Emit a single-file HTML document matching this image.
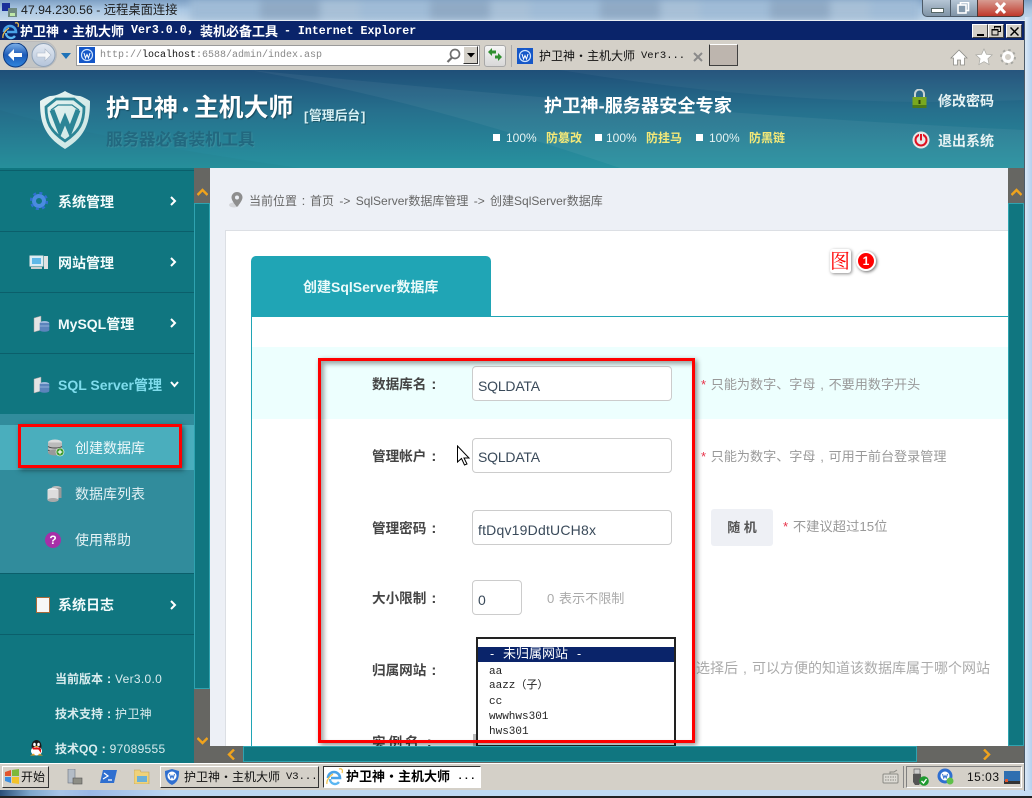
<!DOCTYPE html>
<html lang="zh"><head><meta charset="utf-8"><title>护卫神·主机大师</title>
<style>
html,body{margin:0;padding:0;width:1032px;height:798px;overflow:hidden;background:#a9c6e2}
body{position:relative;font-family:"Liberation Sans","Noto Sans CJK SC",sans-serif}
.a{position:absolute}
.t{position:absolute;white-space:nowrap;line-height:1}
.b{font-weight:bold}
.c{display:inline-block;width:1em;text-align:center;font-family:"Liberation Sans",sans-serif;font-size:1.1em;letter-spacing:0}
.sep{position:absolute;left:0;width:194px;height:1px;background:#0b5f6b}
.inp{position:absolute;box-sizing:border-box;background:#fff;border:1px solid #ccc;border-radius:4px}
.val{position:absolute;white-space:nowrap;font-size:14px;line-height:1;color:#3a4a5a}
.lab{position:absolute;white-space:nowrap;font-size:13.6px;line-height:1;font-weight:bold;color:#444}
.hint{position:absolute;white-space:nowrap;font-size:13.1px;line-height:1;color:#999;word-spacing:1px}
.hint i{color:#e8334a;font-style:normal}
.side{position:absolute;white-space:nowrap;font-size:14px;line-height:1;font-weight:bold;color:#f2fbfb}
.sub{position:absolute;white-space:nowrap;font-size:14px;line-height:1;color:#eef8fa}
.foot{position:absolute;white-space:nowrap;font-size:12px;line-height:1;color:#d9ecee;letter-spacing:.3px}
.foot b{font-weight:bold;letter-spacing:0}
.opt{position:absolute;left:489px;white-space:nowrap;font:11px/1 "Liberation Mono","Noto Sans CJK SC",monospace;color:#222}
.mono{font-family:"Liberation Mono","Noto Sans CJK SC",monospace}
.w2k{position:absolute;box-sizing:border-box;background:#d4d0c8;border:1px solid;border-color:#fff #404040 #404040 #fff}
.y{color:#f4e978;font-weight:bold;font-size:12px}
.pc{color:#e6f3f3;font-size:12px}
.sq{position:absolute;width:7px;height:7px;background:#fff}
</style></head><body>

<!-- Aero title strip -->
<div class="a" style="left:0;top:0;width:1032px;height:21px;background:linear-gradient(180deg,#7ea0c4 0,#a9c6e2 45%,#c6d9ea 100%)"></div>
<div class="a" style="left:190px;top:0;width:730px;height:20px;filter:blur(4px);background:repeating-linear-gradient(90deg,#9fbbd6 0 70px,#8fa9c4 70px 130px,#a7bfd6 130px 170px)"></div>
<div class="a" style="left:0;top:20px;width:1025px;height:1px;background:#e9eef3"></div>
<svg class="a" style="left:2px;top:3px" width="16" height="16" viewBox="0 0 16 16"><rect x="0" y="0" width="8" height="8" fill="#1a2f9a"/><rect x="6" y="5" width="9" height="9" fill="#6f8a80"/><rect x="8" y="10" width="5" height="3" fill="#bfe8a8"/></svg>
<div class="t" style="left:21px;top:4px;font-size:12.3px;color:#1c1c1c">47.94.230.56 - 远程桌面连接</div>
<!-- aero window buttons -->
<div class="a" style="left:922px;top:-2px;width:28px;height:19px;box-sizing:border-box;border:1px solid #4c5a68;border-right:0;border-radius:0 0 0 5px;background:linear-gradient(#b9c9d8,#7f93a6)"></div>
<div class="a" style="left:950px;top:-2px;width:27px;height:19px;box-sizing:border-box;border:1px solid #4c5a68;border-right:0;background:linear-gradient(#b9c9d8,#7f93a6)"></div>
<div class="a" style="left:977px;top:-2px;width:47px;height:19px;box-sizing:border-box;border:1px solid #4c3a38;border-radius:0 0 5px 0;background:linear-gradient(#d9a298,#c0392b)"></div>
<div class="a" style="left:931px;top:8px;width:11px;height:3px;background:#fff;border:1px solid #566"></div>
<svg class="a" style="left:957px;top:2px" width="13" height="12"><rect x="3.5" y=".5" width="8" height="8" fill="none" stroke="#fff" stroke-width="1.6"/><rect x="1" y="3" width="8" height="8" fill="#8499ac" stroke="#fff" stroke-width="1.6"/></svg>
<svg class="a" style="left:994px;top:2px" width="13" height="12"><path d="M2 1l9 10M11 1L2 11" stroke="#fff" stroke-width="3"/></svg>

<!-- IE title bar -->
<div class="a" style="left:0;top:21px;width:1024px;height:19px;background:#0a246a"></div>
<svg class="a" style="left:2px;top:22px" width="17" height="18" viewBox="0 0 17 18"><path d="M2 10a6 6 0 1 1 12 0H5" fill="none" stroke="#4aa3e8" stroke-width="2.6"/><path d="M4 11a5 5 0 0 0 9 3" fill="none" stroke="#5bb7f2" stroke-width="2.4"/><path d="M13 1c3-1 4 1 3 4M1 16c-1-4 3-8 6-10" fill="none" stroke="#f1c24a" stroke-width="1.2"/></svg>
<div class="t b" style="left:20px;top:25px;font-size:13px;color:#fff">护卫神・主机大师</div>
<div class="t b mono" style="left:131px;top:25px;font-size:11.6px;color:#fff">Ver3.0.0，</div>
<div class="t b" style="left:200px;top:25px;font-size:13px;color:#fff">装机必备工具</div>
<div class="t b mono" style="left:284px;top:26px;font-size:11.6px;color:#fff">- Internet Explorer</div>
<div class="w2k" style="left:972px;top:24px;width:16px;height:14px"><div class="a" style="left:4px;top:9px;width:7px;height:2px;background:#000"></div></div>
<div class="w2k" style="left:988px;top:24px;width:16px;height:14px"><svg class="a" style="left:2px;top:1px" width="11" height="10"><path d="M3.5 2.500V.5h6v5H7.500" fill="none" stroke="#000"/><rect x="1" y="3.500" width="6" height="5.500" fill="none" stroke="#000"/><path d="M1 4h6M3 1h7" stroke="#000"/></svg></div>
<div class="w2k" style="left:1006px;top:24px;width:16px;height:14px"><svg class="a" style="left:3px;top:2px" width="9" height="9"><path d="M.5.500l8 8M8.500.500l-8 8" stroke="#000" stroke-width="1.500"/></svg></div>

<!-- IE toolbar -->
<div class="a" style="left:0;top:40px;width:1024px;height:30px;background:#d4d0c8"></div>
<div class="a" style="left:3px;top:41px;width:54px;height:27px;border-radius:14px;background:#c3c5c5;border:1px solid #bbb;box-sizing:border-box"></div>
<svg class="a" style="left:3px;top:43px" width="60" height="26" viewBox="0 0 60 26"><defs><linearGradient id="bk" x1="0" y1="0" x2="0" y2="1"><stop offset="0" stop-color="#7fb2ea"/><stop offset=".5" stop-color="#1d5bb8"/><stop offset="1" stop-color="#2f86de"/></linearGradient><linearGradient id="fw" x1="0" y1="0" x2="0" y2="1"><stop offset="0" stop-color="#e4eaf2"/><stop offset="1" stop-color="#b4c4da"/></linearGradient></defs><circle cx="12.500" cy="12" r="12" fill="url(#bk)" stroke="#0c3a82"/><path d="M5 12l6-6v4h8v4h-8v4z" fill="#fff"/><circle cx="40.500" cy="12" r="11.500" fill="url(#fw)" stroke="#8fa2b8"/><path d="M48 12l-6-6v4h-8v4h8v4z" fill="#f4f6f8" stroke="#aab6c6" stroke-width=".6"/></svg>
<svg class="a" style="left:61px;top:53px" width="10" height="7"><path d="M0 0h10L5 6z" fill="#1e72b8"/></svg>

<div class="a" style="left:76px;top:45px;width:404px;height:21px;background:#fff;border:1px solid #9a9a9a;box-sizing:border-box"></div>
<svg class="a" style="left:79px;top:47px" width="16" height="16"><rect width="16" height="16" fill="#1557c8"/><circle cx="8" cy="8" r="5.500" fill="none" stroke="#cfe4ff" stroke-width="1.200"/><path d="M5 6l1.500 5L8 7.500 9.500 11 11 6" fill="none" stroke="#fff" stroke-width="1"/></svg>
<div class="t mono" style="left:100px;top:51px;font-size:10px;color:#888">http://<span style="color:#111">localhost</span>:6588/admin/index.asp</div>
<svg class="a" style="left:446px;top:48px" width="15" height="15"><circle cx="9" cy="6" r="4.500" fill="none" stroke="#6e6e6e" stroke-width="1.700"/><path d="M6 9.500L1.500 14" stroke="#6e6e6e" stroke-width="2.200"/></svg>
<div class="w2k" style="left:463px;top:46px;width:15px;height:18px;border-color:#fff #333 #333 #fff"><svg class="a" style="left:3px;top:6px" width="8" height="5"><path d="M0 0h8L4 4.500z" fill="#000"/></svg></div>
<div class="a" style="left:484px;top:45px;width:22px;height:22px;box-sizing:border-box;border:1px solid #a8a8a8;border-radius:3px;background:linear-gradient(#f6f6f6,#d8d8d8)"></div>
<svg class="a" style="left:487px;top:47px" width="16" height="16"><path d="M1 5l4-4v2.500h4v3H5V9zM15 10l-4-4v2.500H8v3h3V14z" fill="#2f8f2f"/></svg>
<div class="a" style="left:511px;top:45px;width:1px;height:22px;background:#aaa"></div>
<svg class="a" style="left:517px;top:48px" width="16" height="16"><rect width="16" height="16" fill="#1557c8"/><circle cx="8" cy="8" r="5.500" fill="none" stroke="#cfe4ff" stroke-width="1.200"/><path d="M5 6l1.500 5L8 7.500 9.500 11 11 6" fill="none" stroke="#fff" stroke-width="1"/></svg>
<div class="t" style="left:539px;top:50px;font-size:12px;color:#111">护卫神・主机大师</div>
<div class="t mono" style="left:641px;top:51px;font-size:10.500px;color:#111">Ver3...</div>
<svg class="a" style="left:693px;top:52px" width="10" height="10"><path d="M1 1l8 8M9 1l-8 8" stroke="#8a8a8a" stroke-width="2"/></svg>
<div class="a" style="left:709px;top:44px;width:29px;height:22px;box-sizing:border-box;background:#bdb5ae;border:1px solid;border-color:#fff #404040 #404040 #333"></div>
<svg class="a" style="left:950px;top:49px" width="18" height="17" viewBox="0 0 18 17"><path d="M9 1L1 9h2.500v7h4v-5h3v5h4V9H17z" fill="#fff" stroke="#8d8d88" stroke-width=".8"/></svg>
<svg class="a" style="left:975px;top:48px" width="18" height="18" viewBox="0 0 18 18"><path d="M9 1l2.400 5.300 5.800.6-4.300 3.900 1.200 5.700L9 13.600l-5.100 2.900 1.200-5.700L.8 6.900l5.800-.6z" fill="#fff" stroke="#a8a8a3" stroke-width=".7"/></svg>
<svg class="a" style="left:1000px;top:49px" width="16" height="16" viewBox="0 0 16 16"><circle cx="8" cy="8" r="4.500" fill="none" stroke="#fff" stroke-width="3"/><circle cx="8" cy="8" r="7" fill="none" stroke="#a8a8a3" stroke-width="2" stroke-dasharray="2.500 3"/></svg>

<!-- Header -->
<div class="a" style="left:0;top:70px;width:1024px;height:98px;background:linear-gradient(180deg,#1f4f78 0,#26708d 42%,#27929f 100%);overflow:hidden">
<svg width="1024" height="98" style="position:absolute;left:0;top:0"><path d="M250 0Q420 30 620 98H1024V60Q700 45 250 0z" fill="#fff" opacity=".05"/><path d="M560 0Q800 40 1024 30V0z" fill="#fff" opacity=".04"/><path d="M0 98V40Q100 70 300 98z" fill="#000" opacity=".02"/></svg>
</div>
<svg class="a" style="left:39px;top:90px" width="52" height="60" viewBox="0 0 52 60"><defs><linearGradient id="sh" x1="0" y1="0" x2="1" y2="1"><stop offset="0" stop-color="#e9f5f3"/><stop offset="1" stop-color="#c9e4e2"/></linearGradient></defs><path d="M26 1C21 4 16 6 11 6 8 7 4 9 1 11c0 18 2 34 25 48C49 45 51 29 51 11 48 9 44 7 41 6 36 6 31 4 26 1z" fill="url(#sh)"/><path d="M7 17L17 9H35L45 17C45 32 41 41 26 51 11 41 7 32 7 17z" fill="none" stroke="#2c8596" stroke-width="2.800"/><path d="M12 20l7-5h14l7 5" fill="none" stroke="#2c8596" stroke-width="1.200"/><path d="M13 20l8 21 5-12 5 12 8-21" fill="none" stroke="#2c8596" stroke-width="5"/></svg>
<div class="t b" style="left:106px;top:97px;font-size:24px;color:#fff;text-shadow:1px 1px 1px #174a5c">护卫神</div>
<div class="a" style="left:183px;top:107px;width:5px;height:5px;border-radius:50%;background:#fff"></div>
<div class="t b" style="left:194px;top:97px;font-size:24.800px;color:#fff;text-shadow:1px 1px 1px #174a5c">主机大师</div>
<div class="t b" style="left:304px;top:110px;font-size:13px;color:#d7f0f4;text-shadow:1px 1px 0 #1b5a6c">[</div>
<div class="t b" style="left:309px;top:110px;font-size:12.800px;color:#d7f0f4;text-shadow:1px 1px 0 #1b5a6c">管理后台</div>
<div class="t b" style="left:361px;top:110px;font-size:13px;color:#d7f0f4;text-shadow:1px 1px 0 #1b5a6c">]</div>
<div class="t b" style="left:106px;top:132px;font-size:16.500px;color:#22687f;text-shadow:1px 1px 1px #3a8c9c">服务器必备装机工具</div>
<div class="t b" style="left:544px;top:97px;font-size:18.200px;color:#fff">护卫神-服务器安全专家</div>
<div class="sq" style="left:493px;top:134px"></div><div class="t pc" style="left:506px;top:132px">100%</div><div class="t y" style="left:546px;top:132px">防篡改</div>
<div class="sq" style="left:595px;top:134px"></div><div class="t pc" style="left:606px;top:132px">100%</div><div class="t y" style="left:646px;top:132px">防挂马</div>
<div class="sq" style="left:696px;top:134px"></div><div class="t pc" style="left:709px;top:132px">100%</div><div class="t y" style="left:749px;top:132px">防黑链</div>
<svg class="a" style="left:911px;top:89px" width="17" height="20" viewBox="0 0 17 20"><path d="M4 9V5a4.500 4.500 0 0 1 9 0v4" fill="none" stroke="#c9d3d3" stroke-width="2"/><rect x="1.500" y="8" width="14" height="11" fill="#79a81f"/><rect x="1.500" y="16" width="14" height="3" fill="#4c7a18"/><rect x="7.500" y="11" width="2" height="4" fill="#2c4010"/></svg>
<div class="t b" style="left:938px;top:94px;font-size:14px;color:#e6f2f3">修改密码</div>
<svg class="a" style="left:912px;top:131px" width="18" height="18" viewBox="0 0 18 18"><circle cx="9" cy="9" r="8.500" fill="#e8e8e8"/><circle cx="9" cy="9" r="5.500" fill="none" stroke="#e01020" stroke-width="2"/><path d="M9 2.500v7" stroke="#e8e8e8" stroke-width="4"/><path d="M9 3v6.500" stroke="#e01020" stroke-width="2"/></svg>
<div class="t b" style="left:938px;top:134px;font-size:14px;color:#e6f2f3">退出系统</div>

<!-- Sidebar -->
<div class="a" style="left:0;top:168px;width:194px;height:595px;background:#107680"></div>
<div class="sep" style="top:170px"></div><div class="sep" style="top:231px"></div><div class="sep" style="top:292px"></div><div class="sep" style="top:353px"></div><div class="sep" style="top:573px"></div><div class="sep" style="top:634px"></div>
<div class="a" style="left:0;top:414px;width:194px;height:159px;background:#318c9c"></div>
<div class="a" style="left:0;top:425px;width:194px;height:45px;background:#4aaebd"></div>
<svg class="a" style="left:30px;top:192px" width="18" height="18" viewBox="0 0 18 18"><circle cx="9" cy="9" r="5" fill="none" stroke="#4a8be0" stroke-width="4"/><circle cx="9" cy="9" r="8" fill="none" stroke="#2f6fd0" stroke-width="2.400" stroke-dasharray="3 3.300"/></svg>
<div class="side" style="left:58px;top:195px">系统管理</div>
<svg class="a" style="left:29px;top:255px" width="19" height="16" viewBox="0 0 19 16"><rect x="1" y="1" width="13" height="10" fill="#d8eef8" stroke="#e8e8e8"/><rect x="3" y="3" width="9" height="6" fill="#5fb8e8"/><rect x="15" y="1" width="4" height="13" fill="#e2e2e2"/><rect x="2" y="12" width="11" height="2" fill="#cfcfcf"/></svg>
<div class="side" style="left:58px;top:256px">网站管理</div>
<svg class="a" style="left:33px;top:315px" width="17" height="18" viewBox="0 0 17 18"><path d="M1 3l7-2v14l-7 2z" fill="#e4e4e4" stroke="#9a9a9a" stroke-width=".5"/><ellipse cx="11.500" cy="8" rx="4.800" ry="2" fill="#9db8dc"/><rect x="6.700" y="8" width="9.600" height="7" fill="#5c84bc"/><path d="M6.700 11h9.600" stroke="#8fb0d8"/><ellipse cx="11.500" cy="15" rx="4.800" ry="1.800" fill="#5c84bc"/></svg>
<div class="side" style="left:58px;top:317px">MySQL管理</div>
<svg class="a" style="left:33px;top:376px" width="17" height="18" viewBox="0 0 17 18"><path d="M1 3l7-2v14l-7 2z" fill="#e4e4e4" stroke="#9a9a9a" stroke-width=".5"/><ellipse cx="11.500" cy="8" rx="4.800" ry="2" fill="#9db8dc"/><rect x="6.700" y="8" width="9.600" height="7" fill="#5c84bc"/><path d="M6.700 11h9.600" stroke="#8fb0d8"/><ellipse cx="11.500" cy="15" rx="4.800" ry="1.800" fill="#5c84bc"/></svg>
<div class="side" style="left:58px;top:378px;color:#7fdcec">SQL Server管理</div>
<svg class="a" style="left:170px;top:196px" width="7" height="10"><path d="M1 1l4 4-4 4" fill="none" stroke="#fff" stroke-width="2"/></svg>
<svg class="a" style="left:170px;top:257px" width="7" height="10"><path d="M1 1l4 4-4 4" fill="none" stroke="#fff" stroke-width="2"/></svg>
<svg class="a" style="left:170px;top:318px" width="7" height="10"><path d="M1 1l4 4-4 4" fill="none" stroke="#fff" stroke-width="2"/></svg>
<svg class="a" style="left:170px;top:381px" width="9" height="7"><path d="M1 1l3.500 4L8 1" fill="none" stroke="#fff" stroke-width="2"/></svg>
<svg class="a" style="left:170px;top:600px" width="7" height="10"><path d="M1 1l4 4-4 4" fill="none" stroke="#fff" stroke-width="2"/></svg>

<div class="a" style="left:18px;top:424px;width:164px;height:44px;box-sizing:border-box;border:3px solid #f00;box-shadow:2px 2px 5px rgba(0,0,0,.5)"></div>
<svg class="a" style="left:47px;top:439px" width="18" height="18" viewBox="0 0 18 18"><ellipse cx="8" cy="3.500" rx="7" ry="3" fill="#ddd"/><rect x="1" y="3.500" width="14" height="10" fill="#bbb"/><path d="M1 7.500c3 2 11 2 14 0M1 11c3 2 11 2 14 0" stroke="#444" fill="none"/><ellipse cx="8" cy="13.500" rx="7" ry="3" fill="#999"/><circle cx="13" cy="13" r="4" fill="#3c9a2a" stroke="#fff" stroke-width=".6"/><path d="M13 10.800v4.400M10.800 13h4.400" stroke="#fff" stroke-width="1.200"/></svg>
<div class="sub" style="left:75px;top:441px">创建数据库</div>
<svg class="a" style="left:47px;top:485px" width="15" height="17" viewBox="0 0 15 17"><ellipse cx="9.500" cy="3" rx="5" ry="2" fill="#bbb"/><rect x="4.500" y="3" width="10" height="10" fill="#999"/><ellipse cx="6" cy="5" rx="5.500" ry="2" fill="#eee"/><rect x=".5" y="5" width="11" height="10" fill="#ddd"/><ellipse cx="6" cy="15" rx="5.500" ry="2" fill="#aaa"/></svg>
<div class="sub" style="left:75px;top:487px;color:#e4f2f5">数据库列表</div>
<svg class="a" style="left:45px;top:532px" width="16" height="16"><circle cx="8" cy="8" r="8" fill="#a72fa8"/><text x="8" y="12" font-family="Liberation Sans" font-size="12" font-weight="bold" fill="#fff" text-anchor="middle">?</text></svg>
<div class="sub" style="left:75px;top:533px;color:#e4f2f5">使用帮助</div>
<svg class="a" style="left:36px;top:597px" width="14" height="16"><rect x=".5" y=".5" width="13" height="15" fill="#f7f7f7" stroke="#a86a3a"/></svg>
<div class="side" style="left:58px;top:598px">系统日志</div>
<div class="foot" style="left:55px;top:672px"><b>当前版本<span class="c" style="width:12px">:</span></b>Ver3.0.0</div>
<div class="foot" style="left:55px;top:707px"><b>技术支持<span class="c" style="width:12px">:</span></b>护卫神</div>
<div class="foot" style="left:55px;top:742px"><b>技术QQ<span class="c" style="width:12px">:</span></b>97089555</div>
<svg class="a" style="left:29px;top:740px" width="15" height="16" viewBox="0 0 15 16"><ellipse cx="7.500" cy="6" rx="5" ry="6" fill="#1a1a1a"/><ellipse cx="7.500" cy="11" rx="5.500" ry="4.500" fill="#fff"/><ellipse cx="5.500" cy="4.500" rx="1.300" ry="1.800" fill="#fff"/><ellipse cx="9.500" cy="4.500" rx="1.300" ry="1.800" fill="#fff"/><path d="M3 7.500h9l-1 2H4zM9 9h3v4z" fill="#e01010"/><path d="M5.500 6h4L7.500 7.500z" fill="#f0a020"/><path d="M1 15.500h5l-1-2zM14 15.500H9l1-2z" fill="#f0a020"/></svg>

<!-- Left scrollbar -->
<div class="a" style="left:194px;top:168px;width:16px;height:595px;background:#666662"></div>
<div class="a" style="left:194px;top:203px;width:16px;height:486px;box-sizing:border-box;background:#107680;border:1px solid #2fa3b0"></div>
<svg class="a" style="left:197px;top:188px" width="11" height="8"><path d="M.5 7L5.500 2l5 5" fill="none" stroke="#f0a31c" stroke-width="2.400"/></svg>
<svg class="a" style="left:197px;top:737px" width="11" height="8"><path d="M.5 1L5.500 6l5-5" fill="none" stroke="#f0a31c" stroke-width="2.400"/></svg>

<!-- Content -->
<div class="a" style="left:210px;top:168px;width:798px;height:578px;background:#edf0f6"></div>
<div class="a" style="left:225px;top:230px;width:783px;height:516px;box-sizing:border-box;background:#fff;border:1px solid #dcdfe4;border-right:0;border-bottom:0"></div>
<svg class="a" style="left:228px;top:191px" width="18" height="18" viewBox="0 0 18 18"><ellipse cx="6" cy="14" rx="5" ry="2.500" fill="#d4d6da"/><path d="M9 1a5.500 5.500 0 0 0-5.500 5.500C3.500 10 9 16 9 16s5.500-6 5.500-9.500A5.500 5.500 0 0 0 9 1z" fill="#8e8e8e"/><circle cx="9" cy="6.500" r="2" fill="#edf0f6"/></svg>
<div class="t" style="left:249px;top:194px;font-size:12px;color:#666;word-spacing:2px">当前位置<span class="c" style="width:13px">:</span>首页 -&gt; SqlServer数据库管理 -&gt; 创建SqlServer数据库</div>

<div class="a" style="left:251px;top:256px;width:240px;height:60px;background:#20a5b5;border-radius:5px 5px 0 0"></div>
<div class="t b" style="left:303px;top:280px;font-size:14px;color:#eafafa">创建SqlServer数据库</div>
<div class="a" style="left:251px;top:316px;width:757px;height:1px;background:#20a5b5"></div>
<div class="a" style="left:251px;top:316px;width:1px;height:430px;background:#20a5b5"></div>
<div class="a" style="left:252px;top:347px;width:756px;height:72px;background:#edfffe"></div>

<div class="a" style="left:830px;top:249px;width:21px;height:24px;background:#fff;border-radius:3px;box-shadow:1px 1px 3px rgba(0,0,0,.45)"></div>
<div class="t" style="left:830px;top:250px;font:20px/1 'Noto Serif CJK SC',serif;color:#f00">图</div>
<div class="a" style="left:856px;top:251px;width:20px;height:20px;box-sizing:border-box;border:2px solid #fff;border-radius:50%;background:#f00;box-shadow:1px 1px 3px rgba(0,0,0,.6);color:#fff;font:bold 12px/16px 'Liberation Sans',sans-serif;text-align:center">1</div>

<div class="lab" style="left:372px;top:378px">数据库名<span class="c">:</span></div>
<div class="inp" style="left:472px;top:366px;width:200px;height:35px"></div><div class="val" style="left:478px;top:379px;letter-spacing:-.2px">SQLDATA</div>
<div class="hint" style="left:701px;top:378px"><i>*</i> 只能为数字、字母<span class="c" style="font-size:1em">,</span>不要用数字开头</div>
<div class="lab" style="left:372px;top:450px">管理帐户<span class="c">:</span></div>
<div class="inp" style="left:472px;top:438px;width:200px;height:35px"></div><div class="val" style="left:478px;top:450px;letter-spacing:-.2px">SQLDATA</div>
<div class="hint" style="left:701px;top:450px"><i>*</i> 只能为数字、字母<span class="c" style="font-size:1em">,</span>可用于前台登录管理</div>
<div class="lab" style="left:372px;top:522px">管理密码<span class="c">:</span></div>
<div class="inp" style="left:472px;top:510px;width:200px;height:35px"></div><div class="val" style="left:478px;top:523px;letter-spacing:.2px">ftDqv19DdtUCH8x</div>
<div class="a" style="left:711px;top:509px;width:62px;height:37px;background:#eef0f5;border-radius:3px;color:#555;font-size:13px;font-weight:bold;line-height:37px;text-align:center">随 机</div>
<div class="hint" style="left:783px;top:520px;font-size:13.300px"><i>*</i> 不建议超过15位</div>
<div class="lab" style="left:372px;top:592px">大小限制<span class="c">:</span></div>
<div class="inp" style="left:472px;top:580px;width:50px;height:35px"></div><div class="val" style="left:478px;top:593px">0</div>
<div class="hint" style="left:547px;top:592px;color:#aaa">0 表示不限制</div>
<div class="lab" style="left:372px;top:664px">归属网站<span class="c">:</span></div>
<div class="hint" style="left:696px;top:661px;color:#aaa;font-size:14px">选择后<span class="c" style="font-size:1em">,</span>可以方便的知道该数据库属于哪个网站</div>
<div class="lab" style="left:372px;top:736px;letter-spacing:3px">实例名<span class="c">:</span></div>
<div class="a" style="left:473px;top:734px;width:5px;height:12px;background:#bbb"></div>

<!-- Select popup -->
<div class="a" style="left:476px;top:637px;width:200px;height:110px;box-sizing:border-box;background:#fff;border:2px solid #222"></div>
<div class="a" style="left:478px;top:647px;width:196px;height:15px;background:#0a246a"></div>
<div class="t" style="left:490px;top:647px;font-size:12.500px;line-height:14px;color:#fff">-</div>
<div class="t" style="left:503px;top:647px;font-size:13px;line-height:14px;color:#fff">未归属网站</div>
<div class="t" style="left:577px;top:647px;font-size:12.500px;line-height:14px;color:#fff">-</div>
<div class="opt" style="top:667px">aa</div>
<div class="opt" style="top:681px">aazz（子）</div>
<div class="opt" style="top:697px">cc</div>
<div class="opt" style="top:712px">wwwhws301</div>
<div class="opt" style="top:727px">hws301</div>

<!-- Red annotation -->
<div class="a" style="left:318px;top:358px;width:377px;height:385px;box-sizing:border-box;border:3px solid #f00;box-shadow:2px 2px 5px rgba(0,0,0,.45),inset 3px 3px 5px rgba(0,0,0,.35)"></div>

<!-- Cursor -->
<svg class="a" style="left:456px;top:445px" width="15" height="23" viewBox="0 0 15 23"><path d="M1.500 1v16l4-3.500L8.500 20l2.500-1-3-6h5z" fill="#fff" stroke="#000"/></svg>

<!-- Right scrollbar -->
<div class="a" style="left:1008px;top:168px;width:16px;height:595px;background:#666662"></div>
<div class="a" style="left:1008px;top:203px;width:16px;height:543px;box-sizing:border-box;background:#107680;border:1px solid #2fa3b0"></div>
<svg class="a" style="left:1011px;top:188px" width="11" height="8"><path d="M.5 7L5.500 2l5 5" fill="none" stroke="#f0a31c" stroke-width="2.400"/></svg>
<!-- Horizontal scrollbar -->
<div class="a" style="left:210px;top:746px;width:814px;height:17px;background:#666662"></div>
<div class="a" style="left:243px;top:746px;width:674px;height:16px;box-sizing:border-box;background:#107680;border:1px solid #2fa3b0"></div>
<svg class="a" style="left:227px;top:749px" width="8" height="11"><path d="M7 .5L2 5.500l5 5" fill="none" stroke="#f0a31c" stroke-width="2.400"/></svg>
<svg class="a" style="left:983px;top:749px" width="8" height="11"><path d="M1 .5L6 5.500l-5 5" fill="none" stroke="#f0a31c" stroke-width="2.400"/></svg>

<!-- Taskbar -->
<div class="a" style="left:0;top:763px;width:1024px;height:27px;background:#d4d0c8;border-top:1px solid #fff;box-sizing:border-box"></div>
<div class="w2k" style="left:2px;top:766px;width:47px;height:22px;border-color:#fff #333 #333 #fff"></div>
<svg class="a" style="left:4px;top:769px" width="16" height="15" viewBox="0 0 16 15"><path d="M1 3l6-2v6H1z" fill="#e2552d"/><path d="M8 1l7-1v7H8z" fill="#7db83a"/><path d="M1 8h6v6l-6-2z" fill="#3a8de0"/><path d="M8 8h7v7l-7-1z" fill="#f2c22a"/></svg>
<div class="t" style="left:21px;top:771px;font-size:12px;color:#111">开始</div>
<svg class="a" style="left:67px;top:769px" width="16" height="16" viewBox="0 0 16 16"><rect x="1" y="0" width="7" height="14" fill="#b4bcc6" stroke="#6a7280" stroke-width=".6"/><rect x="6" y="9" width="9" height="6" fill="#8d8d85" stroke="#555" stroke-width=".6"/></svg>
<svg class="a" style="left:100px;top:770px" width="17" height="13" viewBox="0 0 17 13"><path d="M3 0h14l-3 13H0z" fill="#2f6fd0"/><path d="M4 3l4 3-5 3M8 10h4" stroke="#fff" fill="none" stroke-width="1.200"/></svg>
<svg class="a" style="left:134px;top:769px" width="16" height="15" viewBox="0 0 16 15"><path d="M0 1h6l1 2h8v12H0z" fill="#efd27a" stroke="#c0a050" stroke-width=".6"/><rect x="3" y="7" width="10" height="6" fill="#6ab0d8"/></svg>
<div class="w2k" style="left:160px;top:766px;width:159px;height:22px;border-color:#fff #333 #333 #fff"></div>
<svg class="a" style="left:164px;top:768px" width="16" height="18" viewBox="0 0 16 18"><path d="M8 1L1 3c0 7 1 11 7 14 6-3 7-7 7-14z" fill="#2f6fd0"/><circle cx="8" cy="8" r="4.500" fill="#fff"/><path d="M5.500 6l1.300 4L8 7.500 9.200 10l1.300-4" fill="none" stroke="#2f6fd0"/></svg>
<div class="t" style="left:184px;top:771px;font-size:12px;color:#111">护卫神・主机大师</div>
<div class="t mono" style="left:286px;top:772px;font-size:10.500px;color:#111">V3...</div>
<div class="a" style="left:323px;top:766px;width:158px;height:22px;box-sizing:border-box;background:#fff;border:1px solid;border-color:#333 #fff #fff #333"></div>
<svg class="a" style="left:326px;top:768px" width="17" height="18" viewBox="0 0 17 18"><path d="M2 10a6 6 0 1 1 12 0H5" fill="none" stroke="#4aa3e8" stroke-width="2.600"/><path d="M4 11a5 5 0 0 0 9 3" fill="none" stroke="#5bb7f2" stroke-width="2.400"/><path d="M13 1c3-1 4 1 3 4M1 16c-1-4 3-8 6-10" fill="none" stroke="#f1c24a" stroke-width="1.200"/></svg>
<div class="t b" style="left:346px;top:770px;font-size:13px;color:#000">护卫神・主机大师</div>
<div class="t b mono" style="left:457px;top:772px;font-size:10.500px;color:#000">...</div>
<svg class="a" style="left:882px;top:769px" width="17" height="15" viewBox="0 0 17 15"><rect x="1" y="5" width="15" height="9" rx="1" fill="#dcdad4" stroke="#8a8a84"/><path d="M3 8h11M3 11h11" stroke="#8a8a84" stroke-dasharray="1.500 1"/><path d="M8 5V3h4l3-2" fill="none" stroke="#8a8a84"/></svg>
<div class="a" style="left:903px;top:766px;width:1px;height:22px;background:#888"></div>
<div class="a" style="left:906px;top:766px;width:116px;height:22px;box-sizing:border-box;border:1px solid;border-color:#808080 #fff #fff #808080"></div>
<svg class="a" style="left:912px;top:768px" width="18" height="18" viewBox="0 0 18 18"><rect x="2" y="1" width="6" height="5" fill="#ccc" stroke="#555" stroke-width=".6"/><path d="M1 6h8v8l-2 3H3l-2-3z" fill="#555"/><circle cx="12" cy="13" r="4.800" fill="#1f9a2f"/><path d="M9.500 13l2 2 3-4" fill="none" stroke="#fff" stroke-width="1.400"/></svg>
<svg class="a" style="left:937px;top:768px" width="18" height="18" viewBox="0 0 18 18"><circle cx="8" cy="8" r="7.500" fill="#2f6fd0"/><circle cx="8" cy="8" r="4.500" fill="#fff"/><path d="M5.500 6l1.300 4L8 7.500 9.200 10l1.300-4" fill="none" stroke="#2f6fd0"/><circle cx="13" cy="13" r="3.500" fill="#5ec04a"/></svg>
<div class="t" style="left:967px;top:771px;font-size:12px;color:#111;letter-spacing:.5px">15:03</div>
<svg class="a" style="left:1004px;top:771px" width="16" height="13"><rect width="16" height="13" fill="#2f6fb0"/><rect y="10" width="16" height="3" fill="#333"/><rect x="1" y="8" width="3" height="3" fill="#e2552d"/></svg>

<!-- Window frame -->
<div class="a" style="left:0;top:790px;width:1032px;height:6px;background:linear-gradient(90deg,#2a4f78 0,#7ea7cc 30px,#a7c5e8 60px,#9ab8e6 90px,#bcd8f2 170px,#c4dcf4 1032px)"></div>
<div class="a" style="left:0;top:796px;width:1032px;height:2px;background:#222"></div>
<div class="a" style="left:1024px;top:21px;width:1px;height:770px;background:#4c5a68"></div>
<div class="a" style="left:1025px;top:17px;width:7px;height:773px;background:linear-gradient(90deg,#dbe9f7,#b4d0ee)"></div>
</body></html>
